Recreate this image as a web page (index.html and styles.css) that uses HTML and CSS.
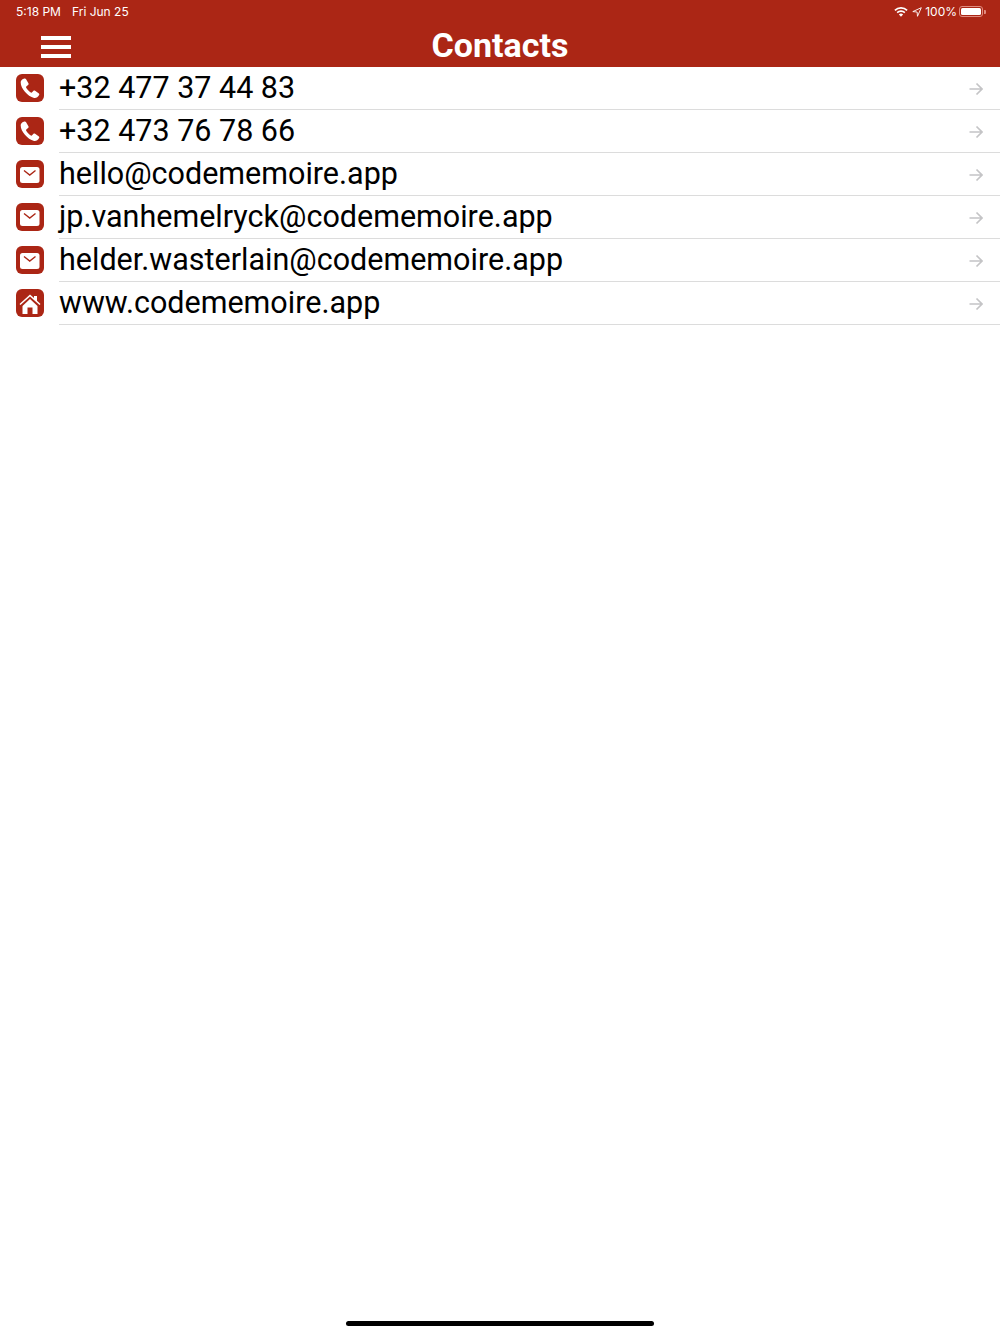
FILE: index.html
```html
<!DOCTYPE html>
<html lang="en">
<head>
    <meta charset="UTF-8">
    <title>Contacts</title>
    <link rel="stylesheet" href="styles.css">
</head>
<body>
    <svg class="defs" width="0" height="0">
        <symbol id="arrow" viewBox="0 0 14 14">
            <path d="M.5 7h12M7.500 1.500 13 7l-5.500 5.500" fill="none" stroke="currentColor" stroke-width="1.700"/>
        </symbol>
        <symbol id="phone" viewBox="0 0 28 28">
            <path d="M6.500 5.200 8.300 4.500c.7-.3 1.400 0 1.800.7l2.300 4c.4.700.2 1.400-.4 1.900l-1.700 1.400c-.3.300-.4.600-.2 1 1.100 2 2.800 3.900 4.700 5.100.4.200.7.200 1-.1l1.500-1.500c.5-.5 1.200-.6 1.800-.2l3.500 2.400c.7.500.9 1.200.5 1.900-1.100 2-3.100 3.300-5 2.900-3.400-.7-6.800-3.300-9.200-6.200-2.400-2.900-4.300-6.200-4.200-9.200 0-1.300.6-2.500 1.800-3.300z" fill="#fff"/>
        </symbol>
        <symbol id="mail" viewBox="0 0 28 28">
            <rect x="4" y="7" width="19.500" height="16" rx="2.500" fill="#fff"/>
            <path d="M8 10.500 13.750 15l5.750-4.500" fill="none" stroke="#ab2615" stroke-width="1.400"/>
        </symbol>
        <symbol id="home" viewBox="0 0 28 28">
            <path d="M3.500 15 14 5.500l4 3.600V7h3v4.800l3.500 3.200-1 1.100L14 7.500 4.500 16.100z" fill="#fff"/>
            <path d="M6.500 17 14 10l7.500 7v8h-5v-6.500h-5V25h-5z" fill="#fff"/>
        </symbol>
    </svg>

    <header class="topbar">
        <div class="status">
            <div class="status-left">
                <span>5:18 PM</span>
                <span>Fri Jun 25</span>
            </div>
            <div class="status-right">
                <svg class="wifi" viewBox="0 0 14 10">
                    <path d="M7 9.800 4.900 7.500a3 3 0 0 1 4.200 0zM3.700 6.300 2.600 5.100a6.300 6.300 0 0 1 8.800 0l-1.100 1.200a4.700 4.700 0 0 0-6.600 0zM1.500 4 .3 2.800a9.600 9.600 0 0 1 13.400 0L12.500 4a7.900 7.900 0 0 0-11 0z" fill="#fff"/>
                </svg>
                <svg class="location" viewBox="0 0 10 10">
                    <path d="M9.300.7 .8 4.600l4.300.4.400 4.300z" fill="none" stroke="#fff" stroke-width=".9"/>
                </svg>
                <span>100%</span>
                <div class="battery"><div class="battery-level"></div></div>
                <div class="battery-nub"></div>
            </div>
        </div>
        <div class="navbar">
            <div class="menu">
                <span></span>
                <span></span>
                <span></span>
            </div>
            <h1>Contacts</h1>
        </div>
    </header>

    <ul class="contacts">
        <li>
            <div class="icon"><svg><use href="#phone"/></svg></div>
            <div class="row"><span class="label">+32 477 37 44 83</span><svg class="arrow"><use href="#arrow"/></svg></div>
        </li>
        <li>
            <div class="icon"><svg><use href="#phone"/></svg></div>
            <div class="row"><span class="label">+32 473 76 78 66</span><svg class="arrow"><use href="#arrow"/></svg></div>
        </li>
        <li>
            <div class="icon"><svg><use href="#mail"/></svg></div>
            <div class="row"><span class="label">hello@codememoire.app</span><svg class="arrow"><use href="#arrow"/></svg></div>
        </li>
        <li>
            <div class="icon"><svg><use href="#mail"/></svg></div>
            <div class="row"><span class="label">jp.vanhemelryck@codememoire.app</span><svg class="arrow"><use href="#arrow"/></svg></div>
        </li>
        <li>
            <div class="icon"><svg><use href="#mail"/></svg></div>
            <div class="row"><span class="label">helder.wasterlain@codememoire.app</span><svg class="arrow"><use href="#arrow"/></svg></div>
        </li>
        <li>
            <div class="icon"><svg><use href="#home"/></svg></div>
            <div class="row"><span class="label">www.codememoire.app</span><svg class="arrow"><use href="#arrow"/></svg></div>
        </li>
    </ul>

    <div class="home-indicator"></div>
</body>
</html>
```

FILE: styles.css
```css
* {
    box-sizing: border-box;
}
html, body {
    height: 100%;
}
body {
    margin: 0;
    display: flex;
    flex-direction: column;
    background-color: #fff;
    font-family: Roboto, sans-serif;
    overflow: hidden;
}
.defs {
    position: absolute;
}
.topbar {
    height: 67px;
    background-color: #ab2615;
    color: #fff;
}
.status {
    height: 24px;
    padding: 0 14.500px 2px 16px;
    display: flex;
    justify-content: space-between;
    align-items: center;
    font-family: "Inter", "Liberation Sans", sans-serif;
    font-size: 12px;
}
.status-left {
    display: flex;
    gap: 11px;
}
.status-right {
    display: flex;
    align-items: center;
    gap: 3px;
}
.wifi {
    width: 14px;
    height: 10px;
    margin: 1px 1px 0 0;
}
.location {
    width: 10px;
    height: 10px;
    margin-top: 1px;
}
.battery {
    width: 24px;
    height: 11px;
    margin: 1px 0 0 -1px;
    padding: 1px;
    border: 1px solid #e08c80;
    border-radius: 3px;
}
.battery-level {
    height: 100%;
    background-color: #fff;
    border-radius: 1.500px;
}
.battery-nub {
    width: 1.500px;
    height: 4px;
    margin: 1px 0 0 -2px;
    background-color: #e08c80;
    border-radius: 0 1px 1px 0;
}
.navbar {
    height: 43px;
    padding: 0 41px;
    display: grid;
    grid-template-columns: 1fr auto 1fr;
    align-items: center;
}
.menu {
    width: 30px;
    margin-top: 3px;
    display: flex;
    flex-direction: column;
    gap: 5px;
}
.menu span {
    height: 4px;
    background-color: #fff;
}
.navbar h1 {
    margin: 0;
    font-size: 34px;
    line-height: 43px;
    font-weight: 700;
}
.contacts {
    margin: 0;
    padding: 0;
    list-style: none;
    flex: 1;
}
.contacts li {
    height: 43px;
    display: flex;
    align-items: center;
}
.icon {
    width: 28px;
    height: 28px;
    margin: 0 15px 1px 16px;
    background-color: #ab2615;
    border-radius: 6px;
}
.icon svg {
    display: block;
    width: 28px;
    height: 28px;
}
.row {
    flex: 1;
    height: 43px;
    padding: 0 17px 0 0;
    display: flex;
    justify-content: space-between;
    align-items: center;
    border-bottom: 1px solid #dcdcdc;
    font-size: 30.500px;
    color: #000;
}
.label {
    margin-bottom: 2px;
}
.arrow {
    width: 14px;
    height: 14px;
    margin-top: 2px;
    color: #c4c4c6;
}
.home-indicator {
    width: 308px;
    height: 5px;
    margin: 0 auto 8px;
    background-color: #000;
    border-radius: 3px;
}
```
